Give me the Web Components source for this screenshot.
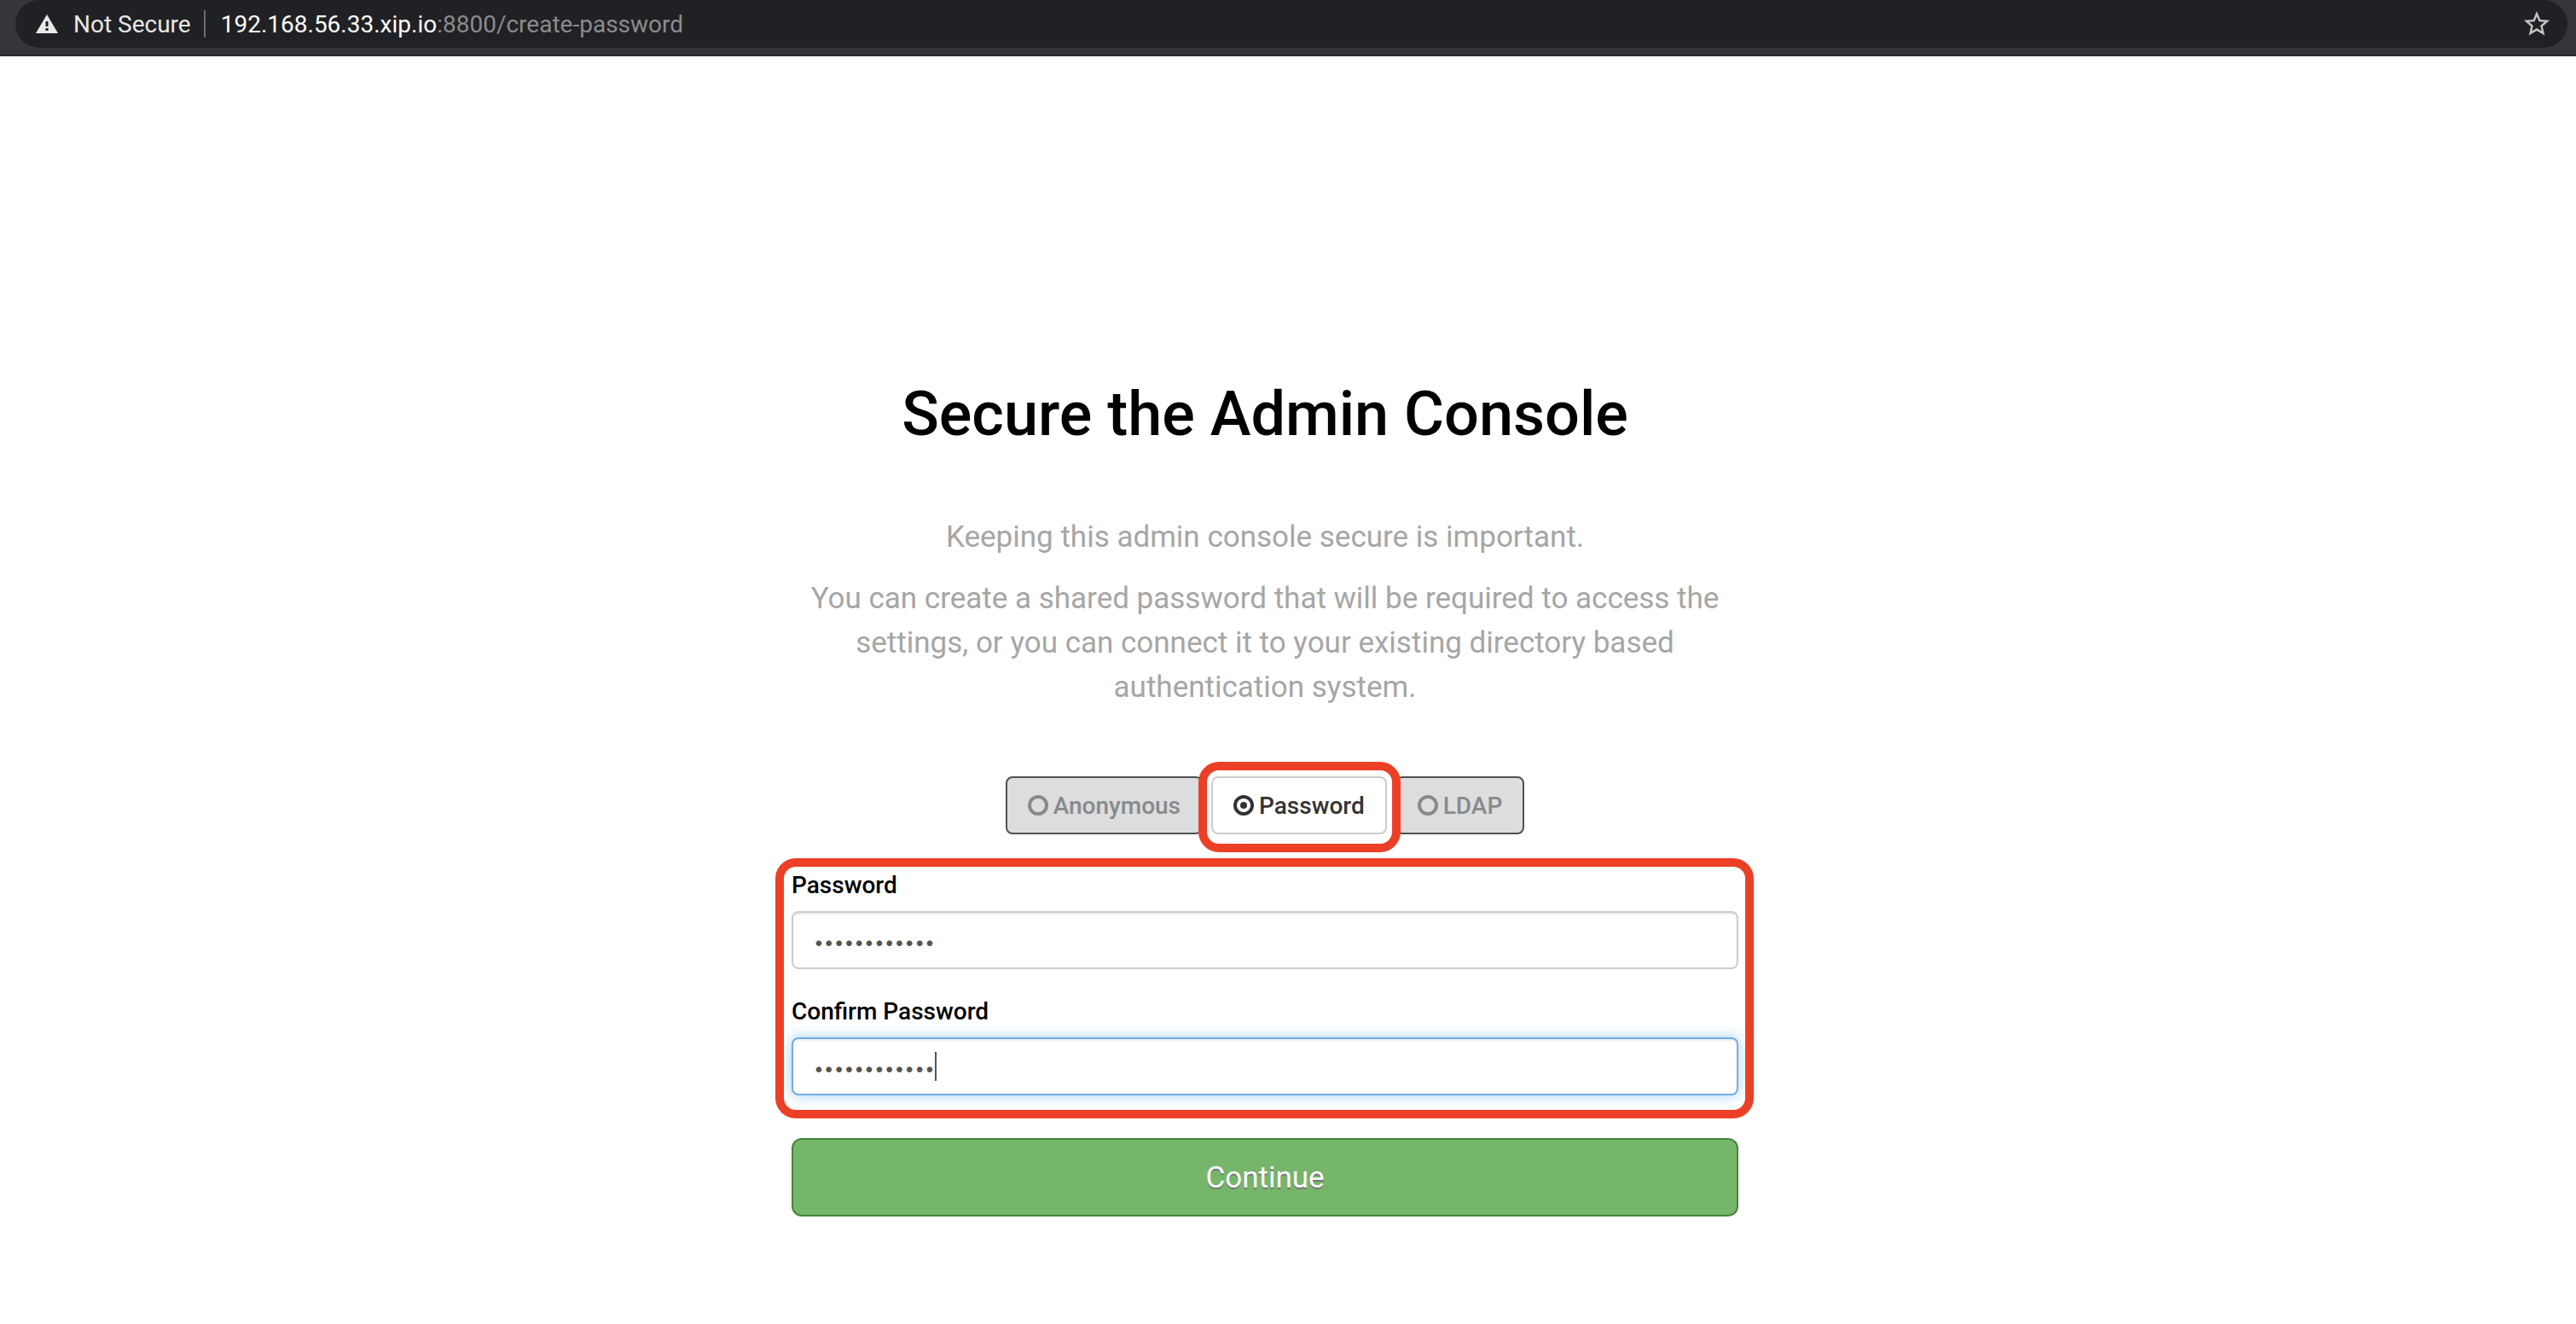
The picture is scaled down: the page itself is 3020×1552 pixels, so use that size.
<!DOCTYPE html>
<html lang="en">
<head>
<meta charset="utf-8">
<title>Secure the Admin Console</title>
<style>
  body { margin: 0; background: #fff; color: #000; font-family: Roboto, "Liberation Sans", sans-serif; font-size: 28px; }
</style>
</head>
<body>
<address-bar status="Not Secure" host="192.168.56.33.xip.io" path=":8800/create-password"></address-bar>
<console-page>
  <span slot="title">Secure the Admin Console</span>
  <page-intro slot="intro">
    <p>Keeping this admin console secure is important.</p>
    <p>You can create a shared password that will be required to access the settings, or you can connect it to your existing directory based authentication system.</p>
  </page-intro>
  <auth-switch></auth-switch>
  <highlight-ring class="fields">
    <password-field label="Password" value="abcdefghijkl"></password-field>
    <password-field label="Confirm Password" value="abcdefghijkl" active></password-field>
  </highlight-ring>
  <primary-button>Continue</primary-button>
</console-page>

<script>
const define = (name, markup, setup) => {
  const template = document.createElement('template');
  template.innerHTML = markup;
  customElements.define(name, class extends HTMLElement {
    constructor() {
      super();
      this.attachShadow({ mode: 'open' }).append(template.content.cloneNode(true));
    }
    connectedCallback() { if (setup) setup(this, this.shadowRoot); }
  });
};

define('address-bar', `
  <style>
    :host { display: block; box-sizing: border-box; height: 66px; padding: 0 10px 8px 18px; background: #35363a; border-bottom: 2px solid #28292c; }
    .pill { display: flex; align-items: center; box-sizing: border-box; height: 56px; padding: 0 18px 0 24px; border-radius: 28px; background: #202124; }
    button { display: flex; align-items: center; gap: 18px; padding: 0; border: 0; background: none; color: #e8e8e8; font: inherit; }
    .divider { width: 2px; height: 32px; margin: 0 18px 0 15px; background: #6c6d70; }
    .url { flex: 1; color: #8b8c8e; }
    .host { color: #fff; }
    svg { display: block; }
  </style>
  <div class="pill">
    <button class="security" type="button">
      <svg width="26" height="24" viewBox="0 0 26 24" aria-hidden="true"><path fill="#e8e8e8" fill-rule="evenodd" d="M13 1 26 23H0ZM11.5 9v6h3V9ZM11.5 17v3h3v-3Z"/></svg>
      <span class="status"></span>
    </button>
    <span class="divider"></span>
    <span class="url"><span class="host"></span><span class="path"></span></span>
    <button type="button" aria-label="Bookmark this page">
      <svg width="36" height="36" viewBox="0 0 24 24" aria-hidden="true"><path fill="#c6c6c6" d="M22 9.24l-7.19-.62L12 2 9.19 8.63 2 9.24l5.46 4.73L5.82 21 12 17.27 18.18 21l-1.63-7.03L22 9.24zM12 15.4l-3.76 2.27 1-4.28-3.32-2.88 4.38-.38L12 6.1l1.71 4.04 4.38.38-3.32 2.88 1 4.28L12 15.4z"/></svg>
    </button>
  </div>`, (el, root) => {
  for (const key of ['status', 'host', 'path']) root.querySelector('.' + key).textContent = el.getAttribute(key);
});

define('console-page', `
  <style>
    :host { display: block; padding: 380px 54px 80px 0; }
    main { display: flex; flex-direction: column; max-width: 1110px; margin: 0 auto; }
    h1 { margin: 0 0 78px; font-size: 72px; font-weight: 500; line-height: 80px; text-align: center; }
    ::slotted(auth-switch) { margin-top: 78px; }
    ::slotted(.fields) { margin-top: 40px; --ring-inset: -12px -18px -27px -19px; }
    ::slotted(primary-button) { margin-top: 50px; }
  </style>
  <main>
    <h1><slot name="title"></slot></h1>
    <slot name="intro"></slot>
    <slot></slot>
  </main>`);

define('page-intro', `
  <style>
    :host { display: block; color: #a6a6a6; font-size: 35px; line-height: 52px; text-align: center; }
    ::slotted(p) { margin: 0 !important; }
    ::slotted(p:not(:first-child)) { margin-top: 20px !important; }
  </style>
  <slot></slot>`);

define('highlight-ring', `
  <style>
    :host { display: block; position: relative; }
    .ring { position: absolute; inset: var(--ring-inset, -16px); border: 10px solid #ec4026; border-radius: 24px; pointer-events: none; }
  </style>
  <slot></slot><div class="ring"></div>`);

define('auth-switch', `
  <style>
    :host { display: block; }
    .group { display: flex; justify-content: center; gap: 10px; }
    label { display: flex; align-items: center; gap: 6px; box-sizing: border-box; height: 68px; padding: 0 24px; border: 2px solid #4e5153; border-radius: 8px; background: #ddd; color: #868a8d; font-weight: 500; }
    label.on { border-color: #ccc; background: #fff; color: #333; }
    input { appearance: none; display: grid; place-items: center; box-sizing: border-box; width: 24px; height: 24px; margin: 0; border: 4px solid currentColor; border-radius: 50%; color: inherit; }
    input:checked::before { content: ""; width: 8px; height: 8px; border-radius: 50%; background: currentColor; }
    highlight-ring { --ring-inset: -17px -16px -21px -15px; }
  </style>
  <div class="group" role="radiogroup" aria-label="Authentication">
    <label><input type="radio" name="auth">Anonymous</label>
    <highlight-ring><label class="on"><input type="radio" name="auth" checked>Password</label></highlight-ring>
    <label><input type="radio" name="auth">LDAP</label>
  </div>`);

define('password-field', `
  <style>
    :host { display: block; }
    :host(:not(:first-child)) { margin-top: 30px; }
    label { display: block; margin-bottom: 10px; font-weight: 500; line-height: 40px; }
    .box { position: relative; display: flex; align-items: center; }
    input { box-sizing: border-box; width: 100%; height: 68px; padding: 4px 24px 0; border: 2px solid #ccc; border-radius: 8px; outline: 0; background: #fff; box-shadow: inset 0 2px 2px rgba(0,0,0,.08); color: #555; font: 21px Inter, sans-serif; }
    :host([active]) input { border-color: #72ade6; box-shadow: inset 0 2px 2px rgba(0,0,0,.08), 0 0 16px rgba(102,175,233,.6); }
    .caret { display: none; position: absolute; left: 168px; width: 2px; height: 34px; background: #555; }
    :host([active]) .caret { display: block; }
  </style>
  <label for="field"></label>
  <div class="box"><input id="field" type="password"><span class="caret"></span></div>`, (el, root) => {
  root.querySelector('label').textContent = el.getAttribute('label');
  root.querySelector('input').value = el.getAttribute('value');
});

define('primary-button', `
  <style>
    :host { display: block; }
    button { display: block; box-sizing: border-box; width: 100%; height: 92px; border: 2px solid #468539; border-radius: 12px; background: #75b66a; color: #fff; font: inherit; font-size: 35px; text-shadow: 0 2px 0 #777; }
  </style>
  <button type="submit"><slot></slot></button>`);
</script>
</body>
</html>
